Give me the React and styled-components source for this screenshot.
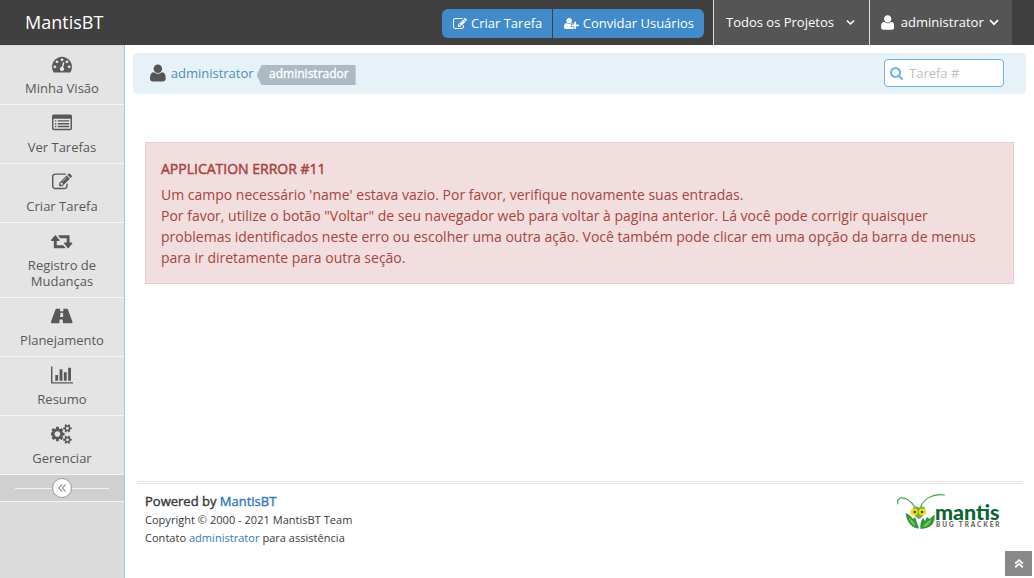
import React from 'react';
import styled, { createGlobalStyle } from 'styled-components';

const GlobalStyle = createGlobalStyle`
  *, *::before, *::after { box-sizing: border-box; }
  html, body { margin: 0; padding: 0; height: 100%; }
  body {
    background: #fff;
    color: #393939;
    font-family: "Open Sans", sans-serif;
    font-size: 13px;
    line-height: 1.5;
    overflow: hidden;
  }
`;

const COG = 'q0 16-149 31-12 27-30 52 51 113 51 138 0 4-4 7-122 71-124 71-8 0-46-47t-52-68q-20 2-30 2t-30-2q-14 21-52 68t-46 47q-2 0-124-71-4-3-4-7 0-25 51-138-18-25-30-52-149-15-149-31v-140q0-16 149-31 13-29 30-52-51-113-51-138 0-4 4-7 4-2 35-20t59-34 30-16q8 0 46 46.5t52 67.5q20-2 30-2t30 2q51-71 92-112l6-2q4 0 124 70 4 3 4 7 0 25-51 138 17 23 30 52 149 15 149 31z';
const DOT = 'q0-53-37.5-90.5t-90.5-37.5-90.5 37.5-37.5 90.5 37.5 90.5 90.5 37.5 90.5-37.5 37.5-90.5z';

const ICONS = {
  user: { w: 1408, x: 192, d: 'M1600 1405q0 120-73 189.5t-194 69.5h-874q-121 0-194-69.5t-73-189.5q0-53 3.5-103.5t14-109 26.5-108.5 43-97.5 62-81 85.5-53.5 111.5-20q9 0 42 21.5t74.5 48 108 48 133.5 21.5 133.5-21.5 108-48 74.5-48 42-21.5q61 0 111.5 20t85.5 53.5 62 81 43 97.5 26.5 108.5 14 109 3.5 103.5zm-320-893q0 159-112.5 271.5t-271.5 112.5-271.5-112.5-112.5-271.5 112.5-271.5 271.5-112.5 271.5 112.5 112.5 271.5z' },
  userPlus: { w: 2048, d: 'M704 896q-159 0-271.5-112.5t-112.5-271.5 112.5-271.5 271.5-112.5 271.5 112.5 112.5 271.5-112.5 271.5-271.5 112.5zm960 128h352q13 0 22.5 9.5t9.5 22.5v192q0 13-9.5 22.5t-22.5 9.5h-352v352q0 13-9.5 22.5t-22.5 9.5h-192q-13 0-22.5-9.5t-9.5-22.5v-352h-352q-13 0-22.5-9.5t-9.5-22.5v-192q0-13 9.5-22.5t22.5-9.5h352v-352q0-13 9.5-22.5t22.5-9.5h192q13 0 22.5 9.5t9.5 22.5v352zm-736 224q0 52 38 90t90 38h256v238q-68 50-171 50h-874q-121 0-194-69t-73-190q0-53 3.5-103.5t14-109 26.5-108.5 43-97.5 62-81 85.5-53.5 111.5-20q19 0 39 17 79 61 154.5 91.5t164.5 30.5 164.5-30.5 154.5-91.5q20-17 39-17 132 0 217 96h-223q-52 0-90 38t-38 90v192z' },
  edit: { w: 1792, d: 'M888 1184l116-116-152-152-116 116v56h96v96h56zm440-720q-16-16-33 1l-350 350q-17 17-1 33t33-1l350-350q17-17 1-33zm80 594v190q0 119-84.5 203.5t-203.5 84.5h-832q-119 0-203.5-84.5t-84.5-203.5v-832q0-119 84.5-203.5t203.5-84.5h832q63 0 117 25 15 7 18 23 3 17-9 29l-49 49q-14 14-32 8-23-6-45-6h-832q-66 0-113 47t-47 113v832q0 66 47 113t113 47h832q66 0 113-47t47-113v-126q0-13 9-22l64-64q15-15 35-7t20 29zm-96-738l288 288-672 672h-288v-288zm444 132l-92 92-288-288 92-92q28-28 68-28t68 28l152 152q28 28 28 68t-28 68z' },
  dashboard: { w: 1792, d: `M384 1152${DOT}M576 704${DOT}M1004 1185l101-382q6-26-7.5-48.5t-38.5-29.5-48 6.5-30 39.5l-101 382q-60 5-107 43.5t-63 98.5q-20 77 20 146t117 89 146-20 89-117q16-60-6-117t-72-91zM1664 1152${DOT}M1024 512${DOT}M1472 704${DOT}M1792 1152q0 261-141 483-19 29-54 29h-1402q-35 0-54-29-141-221-141-483 0-182 71-348t191-286 286-191 348-71 348 71 286 191 191 286 71 348z` },
  list: { w: 1792, d: 'M256 640h128v128h-128zM256 896h128v128h-128zM256 1152h128v128h-128zM512 640h1024v128h-1024zM512 896h1024v128h-1024zM512 1152h1024v128h-1024zM160 128h1472q66 0 113 47t47 113v1088q0 66-47 113t-113 47h-1472q-66 0-113-47t-47-113v-1088q0-66 47-113t113-47zM128 512v864q0 32 32 32h1472q32 0 32-32v-864z' },
  retweet: { w: 1920, d: 'M1280 1504q0 13-9.5 22.5t-22.5 9.5h-960q-8 0-13.5-2t-9-7-5.5-8-3-11.5-1-11.5v-600h-192q-26 0-45-19t-19-45q0-24 15-41l320-384q19-22 49-22t49 22l320 384q15 17 15 41 0 26-19 45t-45 19h-192v384h576q16 0 25 11l160 192q7 10 7 21zm640-416q0 24-15 41l-320 384q-20 23-49 23t-49-23l-320-384q-15-17-15-41 0-26 19-45t45-19h192v-384h-576q-16 0-25-12l-160-192q-7-9-7-20 0-13 9.5-22.5t22.5-9.5h960q8 0 13.5 2t9 7 5.5 8 3 11.5 1 11.5v600h192q26 0 45 19t19 45z' },
  road: { w: 1920, d: 'M480 256h343l-14 192q0 32 32 32h238q32 0 32-32l-14-192h343q55 0 80 57l372 1010q30 80 30 135 0 78-50 78h-800l-22-288q-2-32-34-32h-212q-32 0-34 32l-22 288h-700q-50 0-50-78 0-55 30-135l372-1010q25-57 80-57zM848 640l-20 320q-1 32 30 32h204q31 0 30-32l-20-320q-2-32-34-32h-156q-32 0-34 32z' },
  chart: { w: 2048, d: 'M640 896v512h-256v-512h256zm384-512v1024h-256v-1024h256zm1024 1152v128h-2048v-1536h128v1408h1920zm-640-896v768h-256v-768h256zm384-384v1152h-256v-1152h256z' },
  cogs: { w: 1920, d: `M832 896q0-106-75-181t-181-75-181 75-75 181 75 181 181 75 181-75 75-181zm768 512q0-52-38-90t-90-38-90 38-38 90q0 53 37.5 90.5t90.5 37.5 90.5-37.5 37.5-90.5zm0-1024q0-52-38-90t-90-38-90 38-38 90q0 53 37.5 90.5t90.5 37.5 90.5-37.5 37.5-90.5zm-384 421v185q0 10-7 19.5t-16 10.5l-155 24q-11 35-32 76 34 48 90 115 7 11 7 20 0 12-7 19-23 30-82.5 89.5t-78.5 59.5q-11 0-21-7l-115-90q-37 19-77 31-11 108-23 155-7 24-30 24h-186q-11 0-20-7.5t-10-17.5l-23-153q-34-10-75-31l-118 89q-7 7-20 7-11 0-21-8-144-133-144-160 0-9 7-19 10-14 41-53t47-61q-23-44-35-82l-152-24q-10-1-17-9.5t-7-19.5v-185q0-10 7-19.5t16-10.5l155-24q11-35 32-76-34-48-90-115-7-11-7-20 0-12 7-20 22-30 82-89t79-59q11 0 21 7l115 90q34-18 77-32 11-108 23-154 7-24 30-24h186q11 0 20 7.5t10 17.5l23 153q34 10 75 31l118-89q8-7 20-7 11 0 21 8 144 133 144 160 0 8-7 19-12 16-42 54t-45 60q23 48 34 82l152 23q10 2 17 10.5t7 19.5zM1856 1338v140${COG}M1856 314v140${COG}` },
  search: { w: 1664, x: 64, d: 'M1216 832q0-185-131.5-316.5t-316.5-131.5-316.5 131.5-131.5 316.5 131.5 316.5 316.5 131.5 316.5-131.5 131.5-316.5zm512 832q0 52-38 90t-90 38q-54 0-90-38l-343-342q-179 124-399 124-143 0-273.5-55.5t-225-150-150-225-55.5-273.5 55.5-273.5 150-225 225-150 273.5-55.5 273.5 55.5 225 150 150 225 55.5 273.5q0 220-124 399l343 343q37 37 37 90z' },
};

const Glyph = styled.svg`
  display: block;
  flex: none;
  fill: currentColor;
`;

function Icon({ name, size }) {
  const { w, x = 0, d } = ICONS[name];
  return (
    <Glyph width={(w * size) / 1792} height={size} viewBox={`${x} 0 ${w} 1792`}>
      <path fillRule="evenodd" d={d} />
    </Glyph>
  );
}

const Stroke = styled.svg`
  display: block;
  flex: none;
  fill: none;
  stroke: currentColor;
`;

const ChevronDown = ({ width = 10 }) => (
  <Stroke width={width} height="7" viewBox="0 0 10 7" strokeWidth="1.7">
    <path d="M1 1.2l4 4 4-4" />
  </Stroke>
);

const Page = styled.div`
  display: flex;
  flex-direction: column;
  height: 578px;
`;

const Navbar = styled.header`
  display: flex;
  flex: none;
  height: 45px;
  padding-right: 22px;
  background: #404040;
  color: #fff;
`;

const Brand = styled.a`
  margin-right: auto;
  padding-left: 25px;
  font-size: 18px;
  line-height: 45px;
`;

const ButtonGroup = styled.div`
  display: flex;
  gap: 1px;
  height: 29px;
  margin: 9px 9px 0 0;
  border-radius: 6px;
  overflow: hidden;
`;

const NavButton = styled.a`
  display: flex;
  align-items: center;
  gap: 4px;
  width: ${(p) => p.$width}px;
  padding-left: 11px;
  background: #428bca;
  white-space: nowrap;
`;

const NavMenu = styled.a`
  display: flex;
  align-items: center;
  width: ${(p) => p.$width}px;
  padding-left: ${(p) => p.$inset}px;
  border-left: 1px solid #ddd;
  background: #555;
  white-space: nowrap;
`;

const MenuLabel = styled.span`
  margin: 0 ${(p) => p.$after}px 0 ${(p) => p.$before || 0}px;
`;

const Body = styled.div`
  display: flex;
  flex: 1;
  min-height: 0;
`;

const Sidebar = styled.nav`
  flex: none;
  width: 125px;
  padding-top: 1px;
  border-right: 1px solid #a4c6dd;
  background: #dbdbdb;
`;

const SideItem = styled.a`
  display: flex;
  flex-direction: column;
  align-items: center;
  height: ${(p) => (p.$tall ? 75 : 59)}px;
  padding: 8px 10px 0;
  border-bottom: 1px solid #f5f5f5;
  background: #e4e4e4;
  color: #585858;
  line-height: 16px;
  text-align: center;
`;

const SideLabel = styled.span`
  margin-top: 6px;
`;

const Collapse = styled.div`
  display: flex;
  align-items: center;
  height: 27px;
  padding: 0 15px;
  border-bottom: 1px solid #f5f5f5;
  background: #d0d0d0;
`;

const Rule = styled.span`
  flex: 1;
  height: 1px;
  background: #f3f3f3;
`;

const CollapseKnob = styled.span`
  display: flex;
  align-items: center;
  justify-content: center;
  width: 20px;
  height: 20px;
  border: 1px solid #999;
  border-radius: 50%;
  background: #fff;
  color: #999;
`;

const Main = styled.main`
  display: flex;
  flex: 1;
  flex-direction: column;
  min-width: 0;
  padding: 8px 8px 0;
`;

const Breadcrumbs = styled.div`
  display: flex;
  align-items: center;
  height: 41px;
  padding: 0 22px 0 17px;
  border-radius: 4px;
  background: #e7f2f8;
`;

const UserIcon = styled.span`
  margin: 0 5px 2px 0;
  color: #555;
`;

const Link = styled.a`
  color: ${(p) => p.$color || '#337ab7'};
`;

const RoleLabel = styled.span`
  display: flex;
  align-items: center;
  width: 99px;
  height: 20px;
  margin: 3px auto 0 3px;
  padding: 0 0 2px 12.5px;
  background: #abbac3;
  clip-path: polygon(5px 0, 100% 0, 100% 100%, 5px 100%, 0 50%);
  color: #fff;
  font-size: 12px;
  -webkit-text-stroke: 0.35px currentColor;
`;

const SearchBox = styled.div`
  display: flex;
  align-items: center;
  gap: 6px;
  width: 120px;
  height: 28px;
  margin-bottom: 1px;
  padding-left: 5px;
  border: 1px solid #6fb3e0;
  border-radius: 4px;
  background: #fff;
  color: #6fb3e0;
`;

const Placeholder = styled.span`
  padding-top: 1px;
  color: #c0c0c0;
`;

const Alert = styled.section`
  margin: 48px 12px 0;
  height: 142px;
  padding: 15px 15px;
  border: 1px solid #ebccd1;
  background: #f2dede;
  color: #a94442;
  font-size: 14px;
  line-height: 21px;
`;

const AlertTitle = styled.p`
  margin: 0 0 5px;
  -webkit-text-stroke: 0.5px currentColor;
`;

const AlertText = styled.p`
  margin: 0;
  white-space: nowrap;
`;

const Footer = styled.footer`
  display: flex;
  justify-content: space-between;
  height: 97px;
  margin: auto 4px 0;
  padding: 8px 21px 0 8px;
  border-top: 3px double #e5e5e5;
  font-size: 11px;
  line-height: 18px;
`;

const PoweredBy = styled.div`
  margin-bottom: 1px;
  font-size: 13px;
  -webkit-text-stroke: 0.4px currentColor;
`;

const FinePrint = styled.div`
  letter-spacing: 0.03px;
`;

const ScrollTop = styled.a`
  position: fixed;
  right: 2px;
  bottom: 2px;
  display: flex;
  align-items: center;
  justify-content: center;
  width: 27px;
  height: 25px;
  background: #888;
  color: #fff;
`;

function Logo() {
  return (
    <svg width="105" height="40" viewBox="0 0 105 40">
      <g fill="none" stroke="#3f9d56" strokeWidth="1.1" strokeLinecap="round">
        <path d="M19 15C15 9 9 5 4.500 6Q.5 7.500 2 12" />
        <path d="M24.500 15C27 8 36 1 48.500 3" />
      </g>
      <path fill="#2f9440" d="M9.500 21Q14 22.500 17 27L19 25 23 36.500Q12 36 9.500 21z" />
      <path fill="#2f9440" d="M38.500 22.500Q40 36 24.500 37Q23.500 31 27 26L29 29 31 25 33.500 27z" />
      <path fill="#6fb53c" d="M17 16Q19 13.500 23 15.500Q27 13.500 29 16L29 21Q26 26 23 27Q20 26 17 21z" />
      <path fill="#7cc142" d="M12.500 25Q17 28 20 34Q14 32 12.500 25zM36 27Q34 34 27 35Q28 31 36 27z" />
      <ellipse cx="18" cy="20" rx="3.700" ry="3.400" fill="#f4dd18" />
      <ellipse cx="26.500" cy="20" rx="3.700" ry="3.400" fill="#f4dd18" />
      <circle cx="18.800" cy="20" r="1.300" fill="#5a3b10" />
      <circle cx="26" cy="20" r="1.300" fill="#5a3b10" />
      <text x="39" y="28" textLength="64.500" lengthAdjust="spacingAndGlyphs" fontFamily="Lato, sans-serif" fontWeight="900" fontSize="21.500" fill="#0c6534">mantis</text>
      <text x="40" y="34.500" textLength="63.500" fontFamily="Lato, sans-serif" fontWeight="900" fontSize="6.500" fill="#666">BUG TRACKER</text>
    </svg>
  );
}

const NAV_ITEMS = [
  { icon: 'dashboard', label: 'Minha Visão' },
  { icon: 'list', label: 'Ver Tarefas' },
  { icon: 'edit', label: 'Criar Tarefa' },
  { icon: 'retweet', label: 'Registro de Mudanças', tall: true },
  { icon: 'road', label: 'Planejamento' },
  { icon: 'chart', label: 'Resumo' },
  { icon: 'cogs', label: 'Gerenciar' },
];

export default function App() {
  return (
    <Page>
      <GlobalStyle />
      <Navbar>
        <Brand>MantisBT</Brand>
        <ButtonGroup>
          <NavButton $width={110}><Icon name="edit" size={14} />Criar Tarefa</NavButton>
          <NavButton $width={151}><Icon name="userPlus" size={13} />Convidar Usuários</NavButton>
        </ButtonGroup>
        <NavMenu $width={156} $inset={12}>
          <MenuLabel $after={12}>Todos os Projetos</MenuLabel>
          <ChevronDown width={9} />
        </NavMenu>
        <NavMenu $width={143} $inset={11}>
          <Icon name="user" size={17} />
          <MenuLabel $before={6.5} $after={5}>administrator</MenuLabel>
          <ChevronDown />
        </NavMenu>
      </Navbar>
      <Body>
        <Sidebar>
          {NAV_ITEMS.map(({ icon, label, tall }) => (
            <SideItem key={label} $tall={tall}>
              <Icon name={icon} size={20} />
              <SideLabel>{label}</SideLabel>
            </SideItem>
          ))}
          <Collapse>
            <Rule />
            <CollapseKnob>
              <Stroke width="8" height="8" viewBox="0 0 8 8" strokeWidth="1.2">
                <path d="M4 .5L.8 4 4 7.500M7.500 .5L4.300 4l3.200 3.500" />
              </Stroke>
            </CollapseKnob>
            <Rule />
          </Collapse>
        </Sidebar>
        <Main>
          <Breadcrumbs>
            <UserIcon><Icon name="user" size={20} /></UserIcon>
            <Link $color="#4c8fbd">administrator</Link>
            <RoleLabel>administrador</RoleLabel>
            <SearchBox>
              <Icon name="search" size={14} />
              <Placeholder>Tarefa #</Placeholder>
            </SearchBox>
          </Breadcrumbs>
          <Alert>
            <AlertTitle>APPLICATION ERROR #11</AlertTitle>
            <AlertText>
              Um campo necessário 'name' estava vazio. Por favor, verifique novamente suas entradas.<br />
              Por favor, utilize o botão "Voltar" de seu navegador web para voltar à pagina anterior. Lá você pode corrigir quaisquer<br />
              problemas identificados neste erro ou escolher uma outra ação. Você também pode clicar em uma opção da barra de menus<br />
              para ir diretamente para outra seção.
            </AlertText>
          </Alert>
          <Footer>
            <div>
              <PoweredBy>Powered by <Link>MantisBT</Link></PoweredBy>
              <FinePrint>Copyright © 2000 - 2021 MantisBT Team</FinePrint>
              <FinePrint>Contato <Link>administrator</Link> para assistência</FinePrint>
            </div>
            <Logo />
          </Footer>
        </Main>
      </Body>
      <ScrollTop>
        <Stroke width="10" height="9" viewBox="0 0 10 9" strokeWidth="1.8">
          <path d="M1.200 4.500L5 1.200l3.800 3.300M1.200 8.200L5 4.900l3.800 3.300" />
        </Stroke>
      </ScrollTop>
    </Page>
  );
}
